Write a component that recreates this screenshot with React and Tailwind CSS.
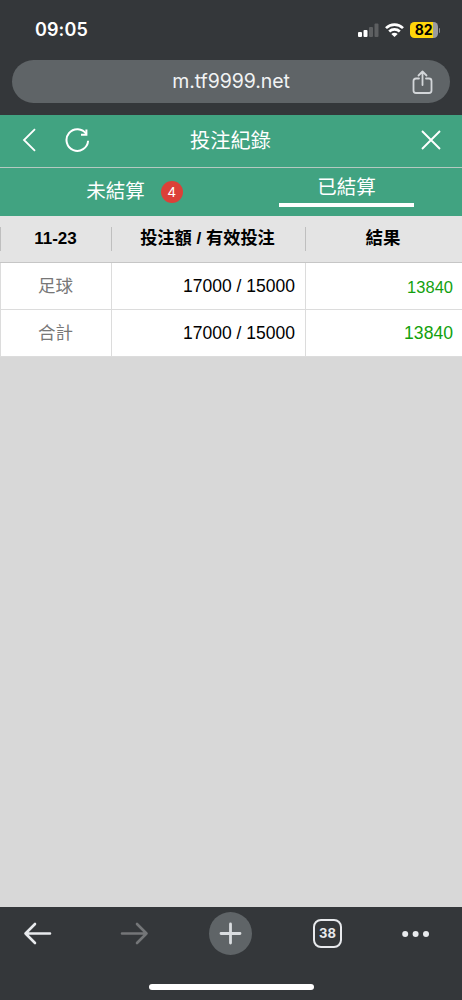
import { useState } from 'react';

const rows = [
  { name: "足球", stake: "17000 / 15000", result: "13840", resultClass: "text-[16.5px] pt-[2px]" },
  { name: "合計", stake: "17000 / 15000", result: "13840", resultClass: "text-[17.6px] pt-[1px]" },
];

function StatusBar() {
  return (
    <div className="flex h-[60px] items-center justify-between pl-[35px] pr-[22px]">
      <span className="font-['Inter',sans-serif] text-[18px] font-semibold leading-none text-white tracking-[0.1px]">09:05</span>
      <div className="flex items-center">
        <svg width="21" height="14" viewBox="0 0 21 14">
          <rect x="0" y="9" width="4" height="5" rx="1" fill="#fff" />
          <rect x="5.5" y="7" width="4" height="7" rx="1" fill="#fff" />
          <rect x="11" y="4" width="4" height="10" rx="1" fill="#5d5f61" />
          <rect x="16.5" y="0.5" width="4" height="13.5" rx="1" fill="#5d5f61" />
        </svg>
        <svg className="ml-[6px]" width="19" height="14" viewBox="0 0 19 14" fill="none" stroke="#fff" strokeWidth="2.7">
          <path d="M1 5.1 A12.2 12.2 0 0 1 18 5.1" />
          <path d="M4.2 8.5 A7.7 7.7 0 0 1 14.8 8.5" />
          <path d="M9.5 14 L6.3 10.9 Q9.5 8.4 12.7 10.9 Z" fill="#fff" stroke="none" />
        </svg>
        <div className="ml-[6px] flex h-[16px] w-[28px] items-center justify-center rounded-[4.5px] bg-[linear-gradient(90deg,#ffd60a_0_82%,#9b9b9d_82%)] font-['Inter',sans-serif] text-[14px] font-bold leading-none text-black tracking-[-0.3px]">82</div>
        <span className="ml-[1px] h-[5px] w-[1.5px] rounded-r bg-[#8b8d8f]" />
      </div>
    </div>
  );
}

function AddressBar() {
  return (
    <div className="mx-[12px] grid h-[43px] grid-cols-[1fr_auto_1fr] items-center rounded-full bg-[#5f6467] pr-[17px]">
      <span />
      <span className="pl-[17px] font-['Inter',sans-serif] text-[19.5px] leading-none text-[#f1f3f4] tracking-[-0.1px]">m.tf9999.net</span>
      <svg className="mt-[2px] justify-self-end" width="21" height="25" viewBox="0 0 21 25" fill="none" stroke="#d3d6d9" strokeWidth="1.8" strokeLinecap="round" strokeLinejoin="round">
        <path d="M7 8.5 H4 Q1.5 8.5 1.5 11 V20.5 Q1.5 23 4 23 H17 Q19.5 23 19.5 20.5 V11 Q19.5 8.5 17 8.5 H14" />
        <path d="M10.5 15 V1.5 M6.5 5.5 L10.5 1.5 L14.5 5.5" />
      </svg>
    </div>
  );
}

function TitleBar({ onClose }) {
  return (
    <div className="grid h-[53px] grid-cols-[1fr_auto_1fr] items-center border-b border-[#b5c9c1] pl-[22px] pr-[20px] pb-[2px]">
      <div className="flex items-center">
        <svg width="14" height="24" viewBox="0 0 14 24" fill="none" stroke="#fff" strokeWidth="1.8">
          <path d="M13 1.2 L2 12 L13 22.8" />
        </svg>
        <svg className="ml-[29px]" width="25" height="25" viewBox="0 0 25 25" fill="none" stroke="#fff" strokeWidth="2">
          <path d="M21.4 6.2 A10.8 10.8 0 1 0 23.1 12.8" />
          <path d="M21.4 1.4 V6.7 H16" />
        </svg>
      </div>
      <h1 className="pr-[3px] pt-[2px] text-[20.2px] leading-none">投注紀錄</h1>
      <button className="justify-self-end" onClick={onClose}>
        <svg width="22" height="20" viewBox="0 0 22 20" fill="none" stroke="#fff" strokeWidth="1.9">
          <path d="M2 1 L20 19 M20 1 L2 19" />
        </svg>
      </button>
    </div>
  );
}

function Tabs({ active, setActive }) {
  const line = "h-[4px] w-[135px]";
  return (
    <div className="grid h-[48px] grid-cols-2 text-[19.5px] leading-none">
      <button className="flex items-center justify-center pl-[38px]" onClick={() => setActive("open")}>
        <span>未結算</span>
        <span className="ml-[16px] flex h-[22px] w-[22px] items-center justify-center rounded-full bg-[#dc4038] text-[14.5px]">4</span>
      </button>
      <button className="flex flex-col items-center pt-[10px]" onClick={() => setActive("settled")}>
        <span>已結算</span>
        <span className={active === "settled" ? `${line} mt-[5px] bg-white` : `${line} mt-[5px]`} />
      </button>
    </div>
  );
}

function BetTable() {
  return (
    <div className="text-[17.5px] leading-none">
      <div className="grid h-[47px] grid-cols-[111px_194px_157px] items-center border-b border-[#c6c6c6] bg-[#e4e4e4] text-center font-bold text-black">
        <div className="flex h-[24px] items-center justify-center border-l border-[#bfbfbf] pr-[1px] pb-[2px] text-[17px]">11-23</div>
        <div className="flex h-[24px] items-center justify-center whitespace-pre border-l border-[#bfbfbf] pr-[2px] text-[17.2px]">投注額 / 有效投注</div>
        <div className="flex h-[24px] items-center justify-center border-l border-[#bfbfbf] pr-[2px]">結果</div>
      </div>
      {rows.map((row, index) => (
        <div key={index} className="grid h-[47px] grid-cols-[111px_194px_157px] border-b border-[#dcdcdc] bg-white">
          <div className="flex items-center justify-center border-l border-[#dcdcdc] pr-[1px] pt-[1px] text-[#777]">{row.name}</div>
          <div className="flex items-center justify-end border-l border-[#dcdcdc] pr-[10px] pt-[1px] text-black">{row.stake}</div>
          <div className={`flex items-center justify-end border-l border-[#dcdcdc] pr-[9px] text-[#13a10e] ${row.resultClass}`}>{row.result}</div>
        </div>
      ))}
    </div>
  );
}

function BottomBar() {
  return (
    <div className="h-[93px] bg-[#34373a]">
      <div className="flex h-[53px] items-center pl-[23px]">
        <svg width="29" height="23" viewBox="0 0 29 23" fill="none" stroke="#e8eaed" strokeWidth="2.6" strokeLinecap="round" strokeLinejoin="round">
          <path d="M27 11.5 H2.5 M12 2 L2.5 11.5 L12 21" />
        </svg>
        <svg className="ml-[68px]" width="29" height="23" viewBox="0 0 29 23" fill="none" stroke="#747678" strokeWidth="2.6" strokeLinecap="round" strokeLinejoin="round">
          <path d="M2 11.5 H26.5 M17 2 L26.5 11.5 L17 21" />
        </svg>
        <div className="ml-[60px] flex h-[43px] w-[43px] items-center justify-center rounded-full bg-[#5f6467]">
          <svg width="25" height="25" viewBox="0 0 25 25" stroke="#dadde0" strokeWidth="2.8" strokeLinecap="round">
            <path d="M3 12.5 H22 M12.5 3 V22" />
          </svg>
        </div>
        <div className="ml-[61px] flex h-[29px] w-[29px] items-center justify-center rounded-[8px] border-[2.5px] border-[#e8eaed] font-['Inter',sans-serif] text-[13px] font-bold leading-none text-[#e8eaed]">38</div>
        <svg className="ml-[60px]" width="28" height="8" viewBox="0 0 28 8" fill="#e8eaed">
          <circle cx="3.2" cy="4" r="3" />
          <circle cx="13.6" cy="4" r="3" />
          <circle cx="24" cy="4" r="3" />
        </svg>
      </div>
      <div className="mx-auto mt-[24px] h-[6px] w-[165px] rounded-full bg-white" />
    </div>
  );
}

export default function App() {
  const [active, setActive] = useState("settled");

  return (
    <div className="flex h-[1000px] w-[462px] flex-col overflow-hidden bg-[#d8d8d8] font-['Liberation_Sans','Noto_Sans_CJK_TC',sans-serif]">
      <div className="h-[115px] bg-[#34373a]">
        <StatusBar />
        <AddressBar />
      </div>
      <div className="bg-[#41a381] text-white">
        <TitleBar onClose={() => setActive("open")} />
        <Tabs active={active} setActive={setActive} />
      </div>
      <BetTable />
      <div className="flex-1" />
      <BottomBar />
    </div>
  );
}
